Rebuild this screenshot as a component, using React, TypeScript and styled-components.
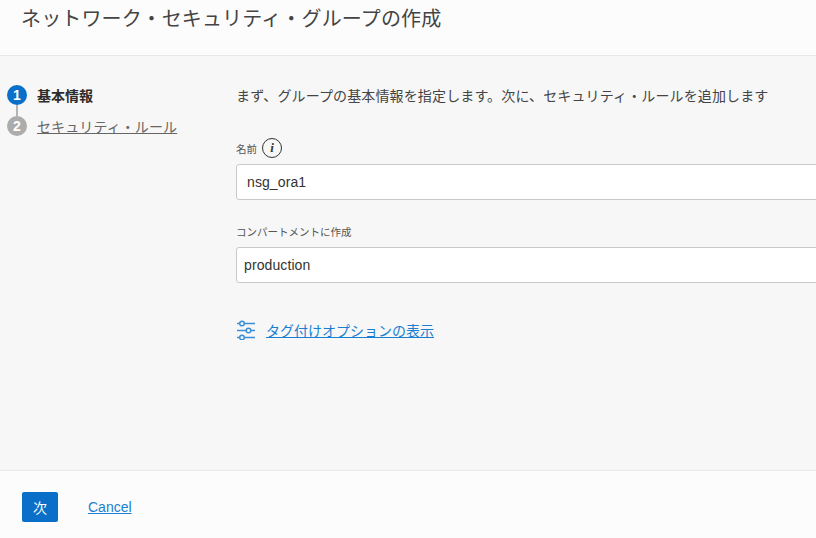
import React from "react";
import styled, { createGlobalStyle } from "styled-components";

const FONT = `"Liberation Sans", "Noto Sans CJK JP", sans-serif`;

const Global = createGlobalStyle`
  html, body { margin: 0; padding: 0; height: 100%; overflow: hidden; }
  body { font-family: ${FONT}; background: #f7f7f7; }
  #root { height: 100%; }
  * { box-sizing: border-box; }
`;

const Page = styled.div`
  width: 816px;
  height: 538px;
  display: flex;
  flex-direction: column;
  overflow: hidden;
  background: #f7f7f7;
  color: #333;
`;

const Header = styled.header`
  height: 56px;
  flex: none;
  background: #fcfcfc;
  border-bottom: 1px solid #e8e8e8;
  padding: 5px 0 0 21px;
`;

const Title = styled.h1`
  margin: 0;
  font-size: 20px;
  line-height: 28px;
  font-weight: 400;
  letter-spacing: 0.15px;
  color: #444;
`;

const Body = styled.main`
  flex: 1;
  display: flex;
  min-height: 0;
`;

const Steps = styled.ol`
  list-style: none;
  margin: 0;
  padding: 29px 0 0 7px;
  width: 236px;
  flex: none;
  display: flex;
  flex-direction: column;
  gap: 11px;
`;

const Step = styled.li`
  position: relative;
  display: flex;
  align-items: center;
  gap: 10px;
  height: 20px;
`;

const Connector = styled.span`
  position: absolute;
  left: 9px;
  top: 20px;
  width: 2px;
  height: 11px;
  background: #b5b5b5;
`;

const Badge = styled.span<{ $active?: boolean }>`
  width: 20px;
  height: 20px;
  border-radius: 50%;
  flex: none;
  display: flex;
  align-items: center;
  justify-content: center;
  font-size: 14px;
  font-weight: 700;
  color: #fff;
  background: ${(p) => (p.$active ? "#0a6fc9" : "#acacac")};
`;

const StepCurrent = styled.span`
  font-size: 14px;
  font-weight: 700;
  color: #2c2c2c;
`;

const StepLink = styled.a`
  font-size: 14px;
  letter-spacing: 0.1px;
  color: #666;
  text-decoration: underline;
`;

const Form = styled.section`
  flex: 1;
  min-width: 0;
  padding-top: 30px;
`;

const Intro = styled.p`
  margin: 0 0 32px;
  font-size: 14px;
  line-height: 20px;
  letter-spacing: 0.13px;
  color: #444;
`;

const Field = styled.div`
  width: 620px;
  margin-bottom: 21px;
`;

const LabelRow = styled.div`
  display: flex;
  align-items: center;
  gap: 5px;
  height: 20px;
  margin-bottom: 6px;
`;

const Label = styled.label`
  font-size: 10.5px;
  color: #555;
`;

const InfoIcon = styled.span`
  width: 20px;
  height: 20px;
  border: 1.5px solid #333;
  border-radius: 50%;
  display: flex;
  align-items: center;
  justify-content: center;
  font-family: "Liberation Serif", serif;
  font-style: italic;
  font-weight: 700;
  font-size: 13px;
  color: #333;
`;

const Input = styled.div<{ $inset?: number }>`
  height: 36px;
  background: #fff;
  border: 1px solid #c9c9c9;
  border-radius: 3px;
  display: flex;
  align-items: center;
  padding-left: ${(p) => p.$inset ?? 7}px;
  font-size: 14px;
  letter-spacing: 0.1px;
  color: #333;
`;

const TagLink = styled.div`
  display: flex;
  align-items: center;
  gap: 10px;
  margin-top: 37px;
  color: #3b8fd6;
`;

const TagText = styled.a`
  font-size: 14px;
  color: #1a7fd1;
  text-decoration: underline;
`;

const Footer = styled.footer`
  height: 68px;
  flex: none;
  background: #fcfcfc;
  border-top: 1px solid #e8e8e8;
  display: flex;
  align-items: center;
  gap: 30px;
  padding: 4px 0 0 22px;
`;

const Primary = styled.button`
  width: 36px;
  height: 30px;
  padding: 0;
  border: none;
  border-radius: 2px;
  background: #0a6fc9;
  color: #fff;
  font-family: ${FONT};
  font-size: 14px;
`;

const Cancel = styled.a`
  font-size: 14px;
  color: #1a7fd1;
  text-decoration: underline;
`;

export default function App() {
  return (
    <Page>
      <Global />
      <Header>
        <Title>ネットワーク・セキュリティ・グループの作成</Title>
      </Header>
      <Body>
        <Steps>
          <Step>
            <Badge $active>1</Badge>
            <StepCurrent>基本情報</StepCurrent>
            <Connector />
          </Step>
          <Step>
            <Badge>2</Badge>
            <StepLink>セキュリティ・ルール</StepLink>
          </Step>
        </Steps>
        <Form>
          <Intro>まず、グループの基本情報を指定します。次に、セキュリティ・ルールを追加します</Intro>
          <Field>
            <LabelRow>
              <Label>名前</Label>
              <InfoIcon>i</InfoIcon>
            </LabelRow>
            <Input $inset={10}>nsg_ora1</Input>
          </Field>
          <Field>
            <LabelRow>
              <Label>コンパートメントに作成</Label>
            </LabelRow>
            <Input>production</Input>
          </Field>
          <TagLink>
            <svg width="20" height="20" viewBox="0 0 20 20" fill="none" stroke="currentColor" strokeWidth="1.5">
              <path d="M1 3.5h2.5M8.5 3.5h10.5M1 10.5h9M15 10.5h4M1 17.5h2.5M8.5 17.5h10.5" />
              <circle cx="6" cy="3.5" r="2.3" />
              <circle cx="12.5" cy="10.5" r="2.3" />
              <circle cx="6" cy="17.5" r="2.3" />
            </svg>
            <TagText>タグ付けオプションの表示</TagText>
          </TagLink>
        </Form>
      </Body>
      <Footer>
        <Primary>次</Primary>
        <Cancel>Cancel</Cancel>
      </Footer>
    </Page>
  );
}
